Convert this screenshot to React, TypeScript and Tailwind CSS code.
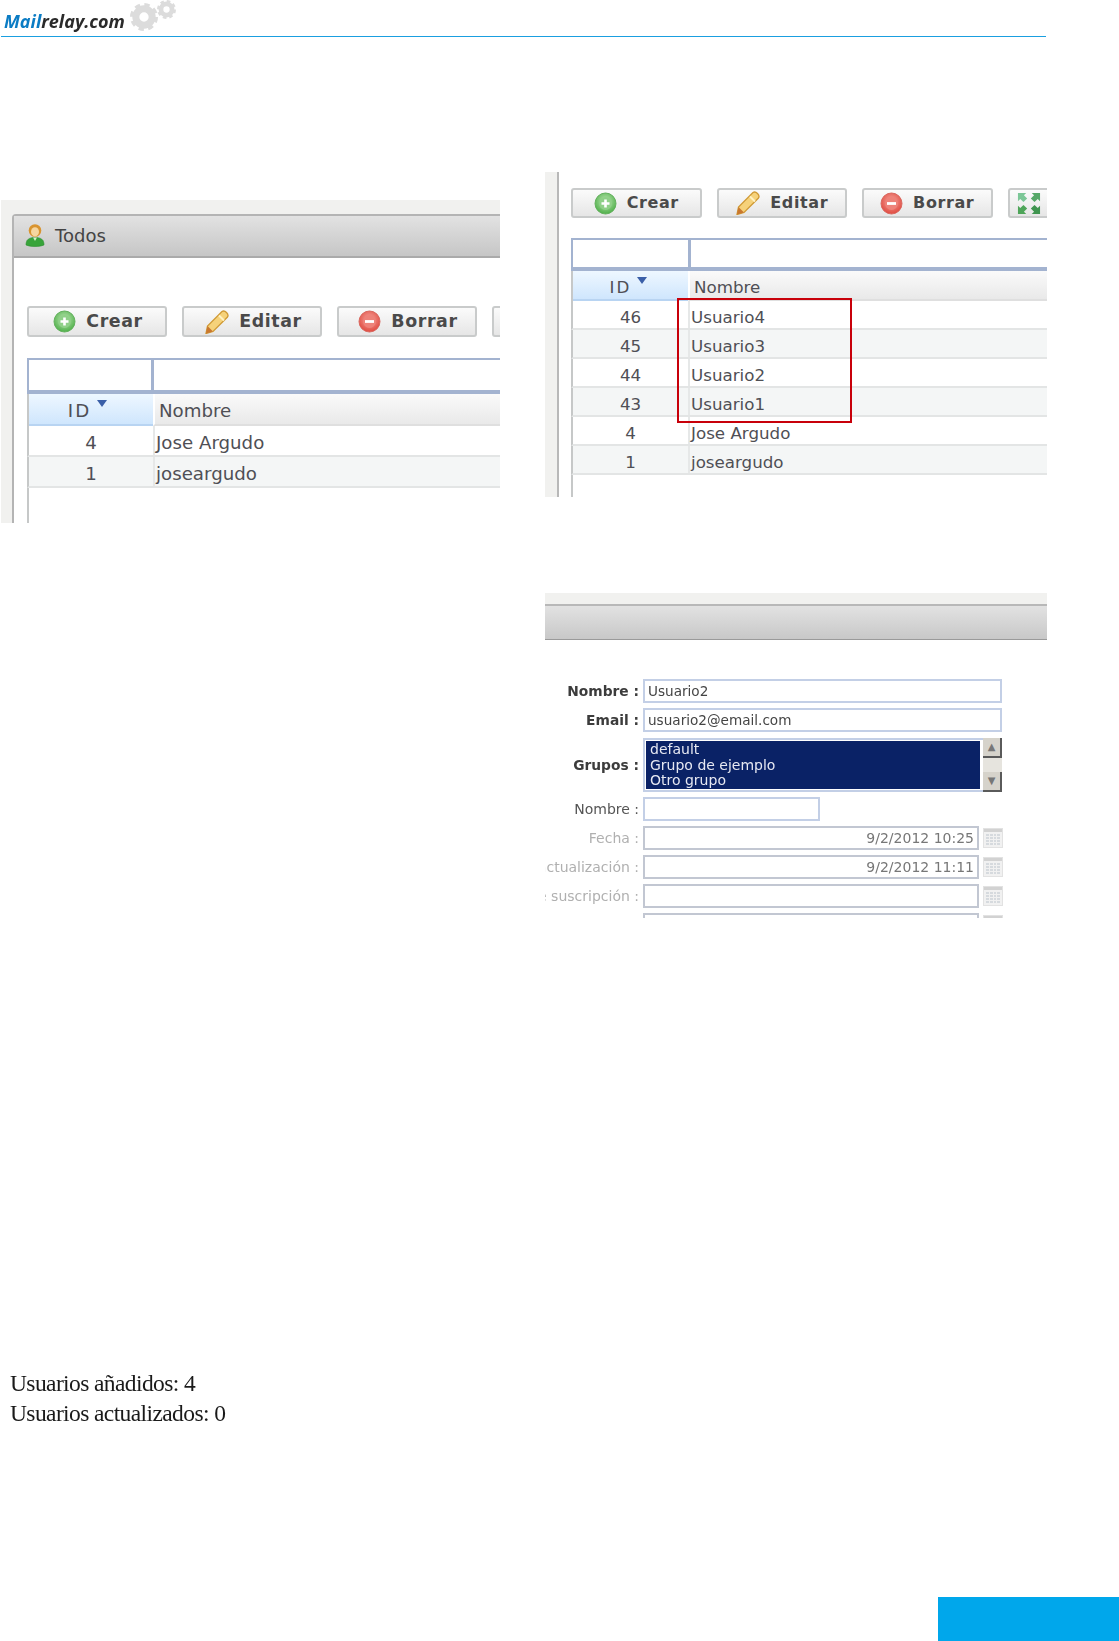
const sans = "font-['DejaVu_Sans',Verdana,sans-serif]";

function Gear({ size, teeth }: { size: number; teeth: number }) {
  const r = 21;
  const per = (2 * Math.PI * r) / teeth;
  return (
    <svg width={size} height={size} viewBox="0 0 48 48">
      <circle cx={24} cy={24} r={14} fill="none" stroke="#dcdcdc" strokeWidth={12} />
      <circle cx={24} cy={24} r={r} fill="none" stroke="#dcdcdc" strokeWidth={6} strokeDasharray={`${per * 0.55} ${per * 0.45}`} />
    </svg>
  );
}

function PlusIcon() {
  return (
    <svg width="23" height="23" viewBox="0 0 23 23">
      <defs>
        <radialGradient id="gp" cx="50%" cy="40%" r="60%">
          <stop offset="0%" stopColor="#bfe7b4" />
          <stop offset="100%" stopColor="#4fb04a" />
        </radialGradient>
      </defs>
      <circle cx="11.5" cy="11.5" r="10.5" fill="url(#gp)" stroke="#62b05c" />
      <circle cx="11.5" cy="11.5" r="6.5" fill="#8fd088" />
      <path d="M11.5 7.5v8M7.5 11.5h8" stroke="#fff" strokeWidth="2.6" />
    </svg>
  );
}
function MinusIcon() {
  return (
    <svg width="23" height="23" viewBox="0 0 23 23">
      <defs>
        <radialGradient id="gm" cx="50%" cy="40%" r="60%">
          <stop offset="0%" stopColor="#f6a79f" />
          <stop offset="100%" stopColor="#e04a40" />
        </radialGradient>
      </defs>
      <circle cx="11.5" cy="11.5" r="10.5" fill="url(#gm)" stroke="#d9675e" />
      <circle cx="11.5" cy="11.5" r="6.5" fill="#ee8279" />
      <path d="M7 11.5h9" stroke="#fff" strokeWidth="2.8" />
    </svg>
  );
}
function PencilIcon() {
  return (
    <svg width="25" height="24" viewBox="0 0 25 24">
      <path d="M18 1.500C19.500.5 21 1 22.500 2.500S24.500 5.500 23.500 7L9 21.500 2 23.500l1.500-7.500Z" fill="#f6d27a" stroke="#d09a35" strokeWidth="1.3" />
      <path d="M15 5.500 20 10.500" stroke="#fff2c4" strokeWidth="2" />
      <path d="M3.500 16 9 21.500 2 23.500Z" fill="#c9772f" />
    </svg>
  );
}
function ExpandIcon() {
  return (
    <svg width="24" height="23" viewBox="0 0 26 25">
      <path d="M1 1h9L7.500 3.500 11 7l-4 4-3.500-3.500L1 10Z" fill="#7cc797" />
      <path d="M25 1v9l-2.500-2.500L19 11l-4-4 3.500-3.500L16 1Z" fill="#56a868" />
      <path d="M1 24v-9l2.500 2.500L7 14l4 4-3.500 3.500L10 24Z" fill="#4ea559" />
      <path d="M25 24h-9l2.500-2.500L15 18l4-4 3.500 3.500L25 15Z" fill="#3f9550" />
    </svg>
  );
}
function UserIcon() {
  return (
    <svg width="20" height="24" viewBox="0 0 20 24">
      <path d="M1 22c0-5.500 3-7.500 9-7.500s9 2 9 7.500c-5 2-13 2-18 0Z" fill="#38a43a" stroke="#2e8f30" strokeWidth=".6" />
      <path d="M8 14.500 10 18l2-3.500Z" fill="#d8f0c8" />
      <circle cx="10" cy="7.500" r="6.300" fill="#d9942f" />
      <ellipse cx="10" cy="8.800" rx="4" ry="4.600" fill="#f6d6a0" />
    </svg>
  );
}
function CalendarIcon() {
  return (
    <span className="flex h-[20px] w-[20px] flex-col border border-[#e2e2e2] bg-[#f1f1f1]">
      <span className="h-[3px] bg-[#d2d2d2]" />
      <span className="m-[2px] grid flex-1 grid-cols-4 gap-[1px]">
        {Array.from({ length: 16 }).map((_, i) => (
          <span key={i} className="bg-[#d6dade]" />
        ))}
      </span>
    </span>
  );
}
function SortArrow() {
  return (
    <svg width="10" height="7" viewBox="0 0 10 7" className="block">
      <path d="M0 0h10L5 7Z" fill="#3a5fa8" />
    </svg>
  );
}

function Btn({ icon, label, cls }: { icon: React.ReactNode; label: string; cls: string }) {
  return (
    <div className={`flex shrink-0 items-center justify-center gap-[10px] rounded-[3px] border-2 border-[#c9cbcb] bg-gradient-to-b from-[#fbfbfb] to-[#e6e6e6] font-bold tracking-[0.6px] text-[#4a4a4a] ${cls}`}>
      {icon}
      <span>{label}</span>
    </div>
  );
}

type Row = [string, string];

function Grid({ rows, split, splitTop, hTop, hHead, hRow, fontCls, textCls, idCls, arrowCls }: { rows: Row[]; split: string; splitTop: string; hTop: string; hHead: string; hRow: string; fontCls: string; textCls: string; idCls: string; arrowCls: string }) {
  return (
    <div className={`flex flex-col text-[#4f4f55] ${fontCls}`}>
      <div className={`flex border-2 border-b-[4px] border-[#a3b3d0] ${hTop}`}>
        <div className={`${splitTop} border-r-[3px] border-[#a3b3d0]`} />
        <div className="flex-1" />
      </div>
      <div className={`flex border-l-2 border-[#c6c8c8] ${hHead}`}>
        <div className={`relative flex ${split} items-center justify-center border-b-2 border-[#b8d4f2] bg-gradient-to-b from-[#eef7ff] to-[#cfe6fd] ${textCls}`}>
          <span className={`tracking-[2px] ${idCls}`}>ID</span>
          <span className={`absolute ${arrowCls}`}><SortArrow /></span>
        </div>
        <div className={`flex flex-1 items-center border-b-2 border-l-2 border-[#dfdfdf] border-l-white bg-gradient-to-b from-[#fafafa] to-[#e9e9e9] pl-[4px] ${textCls}`}>Nombre</div>
      </div>
      {rows.map((r, i) => (
        <div key={i} className={`flex border-b-2 border-l-2 border-[#e3e5e5] border-l-[#c6c8c8] ${hRow} ${i % 2 ? "bg-[#f4f6f6]" : "bg-white"}`}>
          <div className={`flex ${split} items-center justify-center ${textCls}`}>{r[0]}</div>
          <div className={`flex flex-1 items-center border-l-2 border-[#e6e8e8] pl-[1px] ${textCls}`}>{r[1]}</div>
        </div>
      ))}
      <div className="h-[60px] border-l-2 border-[#c6c8c8]" />
    </div>
  );
}

function Field({ label, children, labelCls, h }: { label: string; children: React.ReactNode; labelCls: string; h: string }) {
  return (
    <div className={`flex items-center ${h}`}>
      <div className={`flex w-[94px] shrink-0 justify-end overflow-hidden whitespace-nowrap ${labelCls}`}>{label}</div>
      <div className="ml-[4px] flex flex-1 items-center">{children}</div>
    </div>
  );
}

function Input({ value, cls, muted }: { value?: string; cls: string; muted?: boolean }) {
  return (
    <div className={`flex h-[24px] items-center border-2 px-[3px] ${muted ? "justify-end border-[#c2c7d2] text-[14px] text-[#777]" : "border-[#c3cfe6] text-[13.6px] text-[#444]"} ${cls}`}>
      {value}
    </div>
  );
}

function DateField({ value }: { value?: string }) {
  return (
    <>
      <Input value={value} cls="w-[336px]" muted />
      <span className="ml-[4px]"><CalendarIcon /></span>
    </>
  );
}

function ScrollBtn({ glyph }: { glyph: string }) {
  return (
    <div className="flex h-[20px] items-center justify-center border-b-2 border-r-2 border-[#5a5a5a] bg-[#d6d3cb] text-[10px] leading-none text-[#777]">{glyph}</div>
  );
}

export default function App() {
  return (
    <div className="flex h-[1641px] w-[1119px] flex-col overflow-hidden bg-white">
      <header className="ml-[1px] flex h-[37px] w-[1045px] shrink-0 items-end border-b-[1.5px] border-[#1a9fe0]">
        <span className="mb-[2px] ml-[3px] font-['Open_Sans',sans-serif] text-[18px] font-bold italic leading-[26px] text-[#2a2a2a] blur-[0.3px]">
          <span className="text-[#0b7cc4]">Mail</span>relay.com
        </span>
        <span className="relative mb-[1px] ml-[5px] h-[35px] w-[50px]">
          <span className="absolute left-[0px] top-[3px]"><Gear size={28} teeth={8} /></span>
          <span className="absolute left-[27px] top-[0px]"><Gear size={19} teeth={8} /></span>
        </span>
      </header>

      <div className={`flex shrink-0 items-start ${sans} blur-[0.4px]`}>
        <div className="ml-[1px] mt-[163px] h-[323px] w-[499px] shrink-0 overflow-hidden bg-[#f1f1ef] pl-[11px] pt-[14px]">
          <div className="h-full w-[620px] rounded-tl-[4px] border-l-2 border-t-2 border-[#b4b4b4] bg-white">
            <div className="flex h-[42px] items-center border-b-2 border-[#aaaaaa] bg-gradient-to-b from-[#e2e2e2] to-[#c6c6c6] pb-[2px] pl-[11px] text-[18px] text-[#444]">
              <UserIcon />
              <span className="ml-[10px]">Todos</span>
            </div>
            <div className="pl-[13px] pt-[48px]">
              <div className="flex gap-[15px] text-[17.4px]">
                <Btn cls="h-[31px] w-[140px] pl-[2px]" icon={<PlusIcon />} label="Crear" />
                <Btn cls="h-[31px] w-[140px] pl-[2px]" icon={<PencilIcon />} label="Editar" />
                <Btn cls="h-[31px] w-[140px] pl-[2px]" icon={<MinusIcon />} label="Borrar" />
                <Btn cls="h-[31px] w-[50px]" icon={null} label="" />
              </div>
              <div className="mt-[21px]">
                <Grid
                  rows={[["4", "Jose Argudo"], ["1", "joseargudo"]]}
                  split="w-[124px]"
                  splitTop="w-[125px]"
                  hTop="h-[36px]"
                  hHead="h-[32px]"
                  hRow="h-[31px]"
                  fontCls="text-[18.2px]"
                  textCls="pt-[4px]"
                  idCls="mr-[23px]"
                  arrowCls="left-[68px] top-[6px]"
                />
              </div>
            </div>
          </div>
        </div>

        <div className="ml-[45px] mt-[135px] flex w-[502px] shrink-0 flex-col">
          <div className="relative h-[325px] overflow-hidden">
            <div className="flex h-full w-[620px]">
              <div className="w-[12px] shrink-0 bg-[#f1f1ef]" />
              <div className="flex-1 border-l-2 border-[#b8b8b8] bg-white pl-[12px] pt-[16px]">
                <div className="flex gap-[15px] text-[16px]">
                  <Btn cls="h-[30px] w-[130.5px]" icon={<PlusIcon />} label="Crear" />
                  <Btn cls="h-[30px] w-[130.5px]" icon={<PencilIcon />} label="Editar" />
                  <Btn cls="h-[30px] w-[130.5px]" icon={<MinusIcon />} label="Borrar" />
                  <Btn cls="h-[30px] w-[50px] justify-start pl-[7px]" icon={<ExpandIcon />} label="" />
                </div>
                <div className="mt-[20px]">
                  <Grid
                    rows={[["46", "Usuario4"], ["45", "Usuario3"], ["44", "Usuario2"], ["43", "Usuario1"], ["4", "Jose Argudo"], ["1", "joseargudo"]]}
                    split="w-[115px]"
                    splitTop="w-[118px]"
                    hTop="h-[33px]"
                    hHead="h-[30px]"
                    hRow="h-[29px]"
                    fontCls="text-[16.7px]"
                    textCls="pt-[6px]"
                    idCls="mr-[20px]"
                    arrowCls="left-[64px] top-[6px]"
                  />
                </div>
              </div>
            </div>
            <div className="absolute left-[132px] top-[126px] h-[125px] w-[175px] border-[2.5px] border-[#c8000a]" />
          </div>

          <div className="mt-[96px] h-[325px] overflow-hidden">
            <div className="h-[11px] bg-[#f1f1ef]" />
            <div className="h-[36px] border-b border-t-2 border-b-[#9a9a9a] border-t-[#b8b8b8] bg-gradient-to-b from-[#e2e2e2] to-[#c8c8c8]" />
            <div className="flex w-[457px] flex-col gap-[5px] pt-[39px] text-[14px]">
              <Field h="h-[24px]" label="Nombre :" labelCls="text-[13.8px] font-bold text-[#3c3c3c]"><Input value="Usuario2" cls="w-full" /></Field>
              <Field h="h-[24px]" label="Email :" labelCls="text-[13.8px] font-bold text-[#3c3c3c]"><Input value="usuario2@email.com" cls="w-full" /></Field>
              <Field h="mt-[1px] h-[54px]" label="Grupos :" labelCls="text-[13.8px] font-bold text-[#3c3c3c]">
                <div className="flex h-[54px] w-full border-2 border-r-0 border-[#c3cfe6]">
                  <div className="flex-1 overflow-hidden border border-white bg-[#0a2266] pl-[4px] pt-[1px] text-[14px] leading-[15.6px] text-[#e6e8f2]">
                    <div>default</div>
                    <div>Grupo de ejemplo</div>
                    <div>Otro grupo</div>
                  </div>
                  <div className="ml-[2px] -my-[2px] flex w-[19px] flex-col justify-between bg-[#e6e4de]">
                    <ScrollBtn glyph="▲" />
                    <ScrollBtn glyph="▼" />
                  </div>
                </div>
              </Field>
              <Field h="h-[24px]" label="Nombre :" labelCls="text-[#555]"><Input cls="w-[177px]" /></Field>
              <Field h="h-[24px]" label="Fecha :" labelCls="text-[#b0b0b0]"><DateField value="9/2/2012 10:25" /></Field>
              <Field h="h-[24px]" label="Última actualización :" labelCls="text-[#b0b0b0]"><DateField value="9/2/2012 11:11" /></Field>
              <Field h="h-[24px]" label="Fecha de suscripción :" labelCls="text-[#b0b0b0]"><DateField /></Field>
              <Field h="h-[24px]" label="" labelCls=""><DateField /></Field>
            </div>
          </div>
        </div>
      </div>

      <div className="ml-[10px] mt-[450px] font-['Liberation_Serif',serif] text-[23.5px] leading-[30px] tracking-[-0.6px] text-[#1a1a1a] blur-[0.3px]">
        <p>Usuarios añadidos: 4</p>
        <p>Usuarios actualizados: 0</p>
      </div>

      <div className="mt-auto flex justify-end">
        <div className="h-[44px] w-[181px] bg-[#00a7eb]" />
      </div>
    </div>
  );
}
